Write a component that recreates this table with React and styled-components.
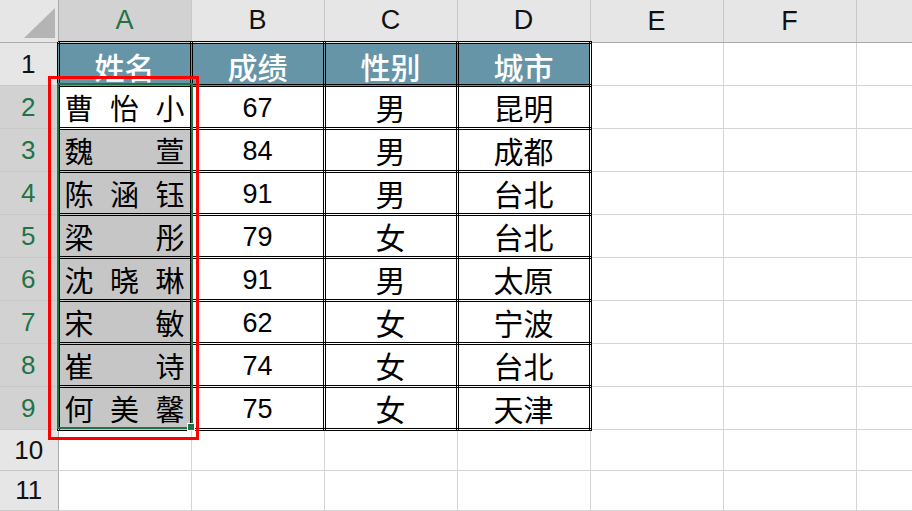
import React from "react";
import styled, { createGlobalStyle } from "styled-components";

const GlobalStyle = createGlobalStyle`
    html, body {
        margin: 0;
        padding: 0;
        background: #ffffff;
        overflow: hidden;
    }
`;

const LATIN = `"Liberation Sans", "Noto Sans CJK SC", sans-serif`;
const CJK = `"Noto Sans CJK SC", "Liberation Sans", sans-serif`;

const Sheet = styled.div`
    position: relative;
    width: 912px;
    height: 511px;
    overflow: hidden;
    background: #ffffff;
`;

const Grid = styled.table`
    border-collapse: collapse;
    table-layout: fixed;
    width: 918px;
    font-family: ${LATIN};
`;

const Corner = styled.th`
    position: relative;
    background: #e6e6e6;
    border-right: 1px solid #ababab;
    border-bottom: 1px solid #ababab;
    padding: 0;

    svg {
        position: absolute;
        right: 3px;
        bottom: 4px;
    }
`;

const ColHead = styled.th`
    height: 41px;
    padding: 0;
    font-weight: normal;
    font-size: 27px;
    color: ${(p) => (p.$active ? "#217346" : "#111111")};
    background: ${(p) => (p.$active ? "#d2d2d2" : "#e6e6e6")};
    border-left: 1px solid #c8c8c8;
    border-right: 1px solid #c8c8c8;
    border-bottom: ${(p) => (p.$active ? "2px solid #217346" : "1px solid #ababab")};
    text-align: center;
    vertical-align: middle;
`;

const RowHead = styled.th`
    padding: 0;
    font-weight: normal;
    font-size: 26px;
    color: ${(p) => (p.$active ? "#217346" : "#111111")};
    background: ${(p) => (p.$active ? "#d2d2d2" : "#e6e6e6")};
    border-top: 1px solid #c8c8c8;
    border-bottom: 1px solid #c8c8c8;
    border-right: 1px solid #ababab;
    text-align: center;
    vertical-align: middle;
`;

const Row = styled.tr`
    height: ${(p) => p.$h}px;
`;

const Blank = styled.td`
    padding: 0;
    border: 1px solid #d4d4d4;
`;

const DataCell = styled.td`
    padding: ${(p) => (p.$cjk ? "0 5px" : "3px 5px 0")};
    border: 3px double #000000;
    text-align: center;
    vertical-align: middle;
    font-size: 27px;
    line-height: 1;
    color: #000000;
    background: ${(p) => p.$bg || "#ffffff"};
    font-family: ${(p) => (p.$cjk ? CJK : LATIN)};
    ${(p) => p.$cjk && "font-size: 30px;"}
`;

const TitleCell = styled(DataCell)`
    background: #6795a8;
    color: #ffffff;
    font-family: ${CJK};
    font-size: 30px;
    font-weight: 500;
`;

const Spread = styled.div`
    display: flex;
    justify-content: space-between;
    align-items: center;
    font-family: ${CJK};
    font-size: 29px;
    line-height: 1;
`;

const Selection = styled.div`
    position: absolute;
    left: 57px;
    top: 83px;
    width: 132px;
    height: 342px;
    border: 2px solid #217346;
    pointer-events: none;
`;

const FillHandle = styled.div`
    position: absolute;
    left: 187px;
    top: 423px;
    width: 6px;
    height: 6px;
    background: #217346;
    border: 1px solid #ffffff;
`;

const RedMark = styled.div`
    position: absolute;
    left: 48px;
    top: 76px;
    width: 145px;
    height: 358px;
    border: 3px solid #ff0000;
    pointer-events: none;
`;

const rows = [
    ["曹怡小", 67, "男", "昆明"],
    ["魏萱", 84, "男", "成都"],
    ["陈涵钰", 91, "男", "台北"],
    ["梁彤", 79, "女", "台北"],
    ["沈晓琳", 91, "男", "太原"],
    ["宋敏", 62, "女", "宁波"],
    ["崔诗", 74, "女", "台北"],
    ["何美馨", 75, "女", "天津"],
];

const cols = ["A", "B", "C", "D", "E", "F", ""];

const App = () => {
    return (
        <Sheet>
            <GlobalStyle />
            <Grid>
                <colgroup>
                    <col style={{ width: 58 }} />
                    {cols.map((c, i) => (
                        <col key={i} style={{ width: c ? 133 : 62 }} />
                    ))}
                </colgroup>
                <tbody>
                    <Row $h={41}>
                        <Corner>
                            <svg width="31" height="30" viewBox="0 0 31 30">
                                <polygon points="31,0 31,30 0,30" fill="#b4b4b4" />
                            </svg>
                        </Corner>
                        {cols.map((c, i) => (
                            <ColHead key={i} $active={c === "A"}>{c}</ColHead>
                        ))}
                    </Row>
                    <Row $h={43}>
                        <RowHead>1</RowHead>
                        <TitleCell>姓名</TitleCell>
                        <TitleCell>成绩</TitleCell>
                        <TitleCell>性别</TitleCell>
                        <TitleCell>城市</TitleCell>
                        <Blank />
                        <Blank />
                        <Blank />
                    </Row>
                    {rows.map(([name, score, sex, city], i) => (
                        <Row $h={43} key={name}>
                            <RowHead $active>{i + 2}</RowHead>
                            <DataCell $cjk $bg={i === 0 ? "#ffffff" : "#c6c6c6"}>
                                <Spread>
                                    {name.split("").map((ch) => (
                                        <span key={ch}>{ch}</span>
                                    ))}
                                </Spread>
                            </DataCell>
                            <DataCell>{score}</DataCell>
                            <DataCell $cjk>{sex}</DataCell>
                            <DataCell $cjk>{city}</DataCell>
                            <Blank />
                            <Blank />
                            <Blank />
                        </Row>
                    ))}
                    {[10, 11].map((n) => (
                        <Row $h={n === 10 ? 41 : 40} key={n}>
                            <RowHead>{n}</RowHead>
                            {cols.map((c, i) => (
                                <Blank key={i} />
                            ))}
                        </Row>
                    ))}
                </tbody>
            </Grid>
            <Selection />
            <FillHandle />
            <RedMark />
        </Sheet>
    );
};

export default App;
